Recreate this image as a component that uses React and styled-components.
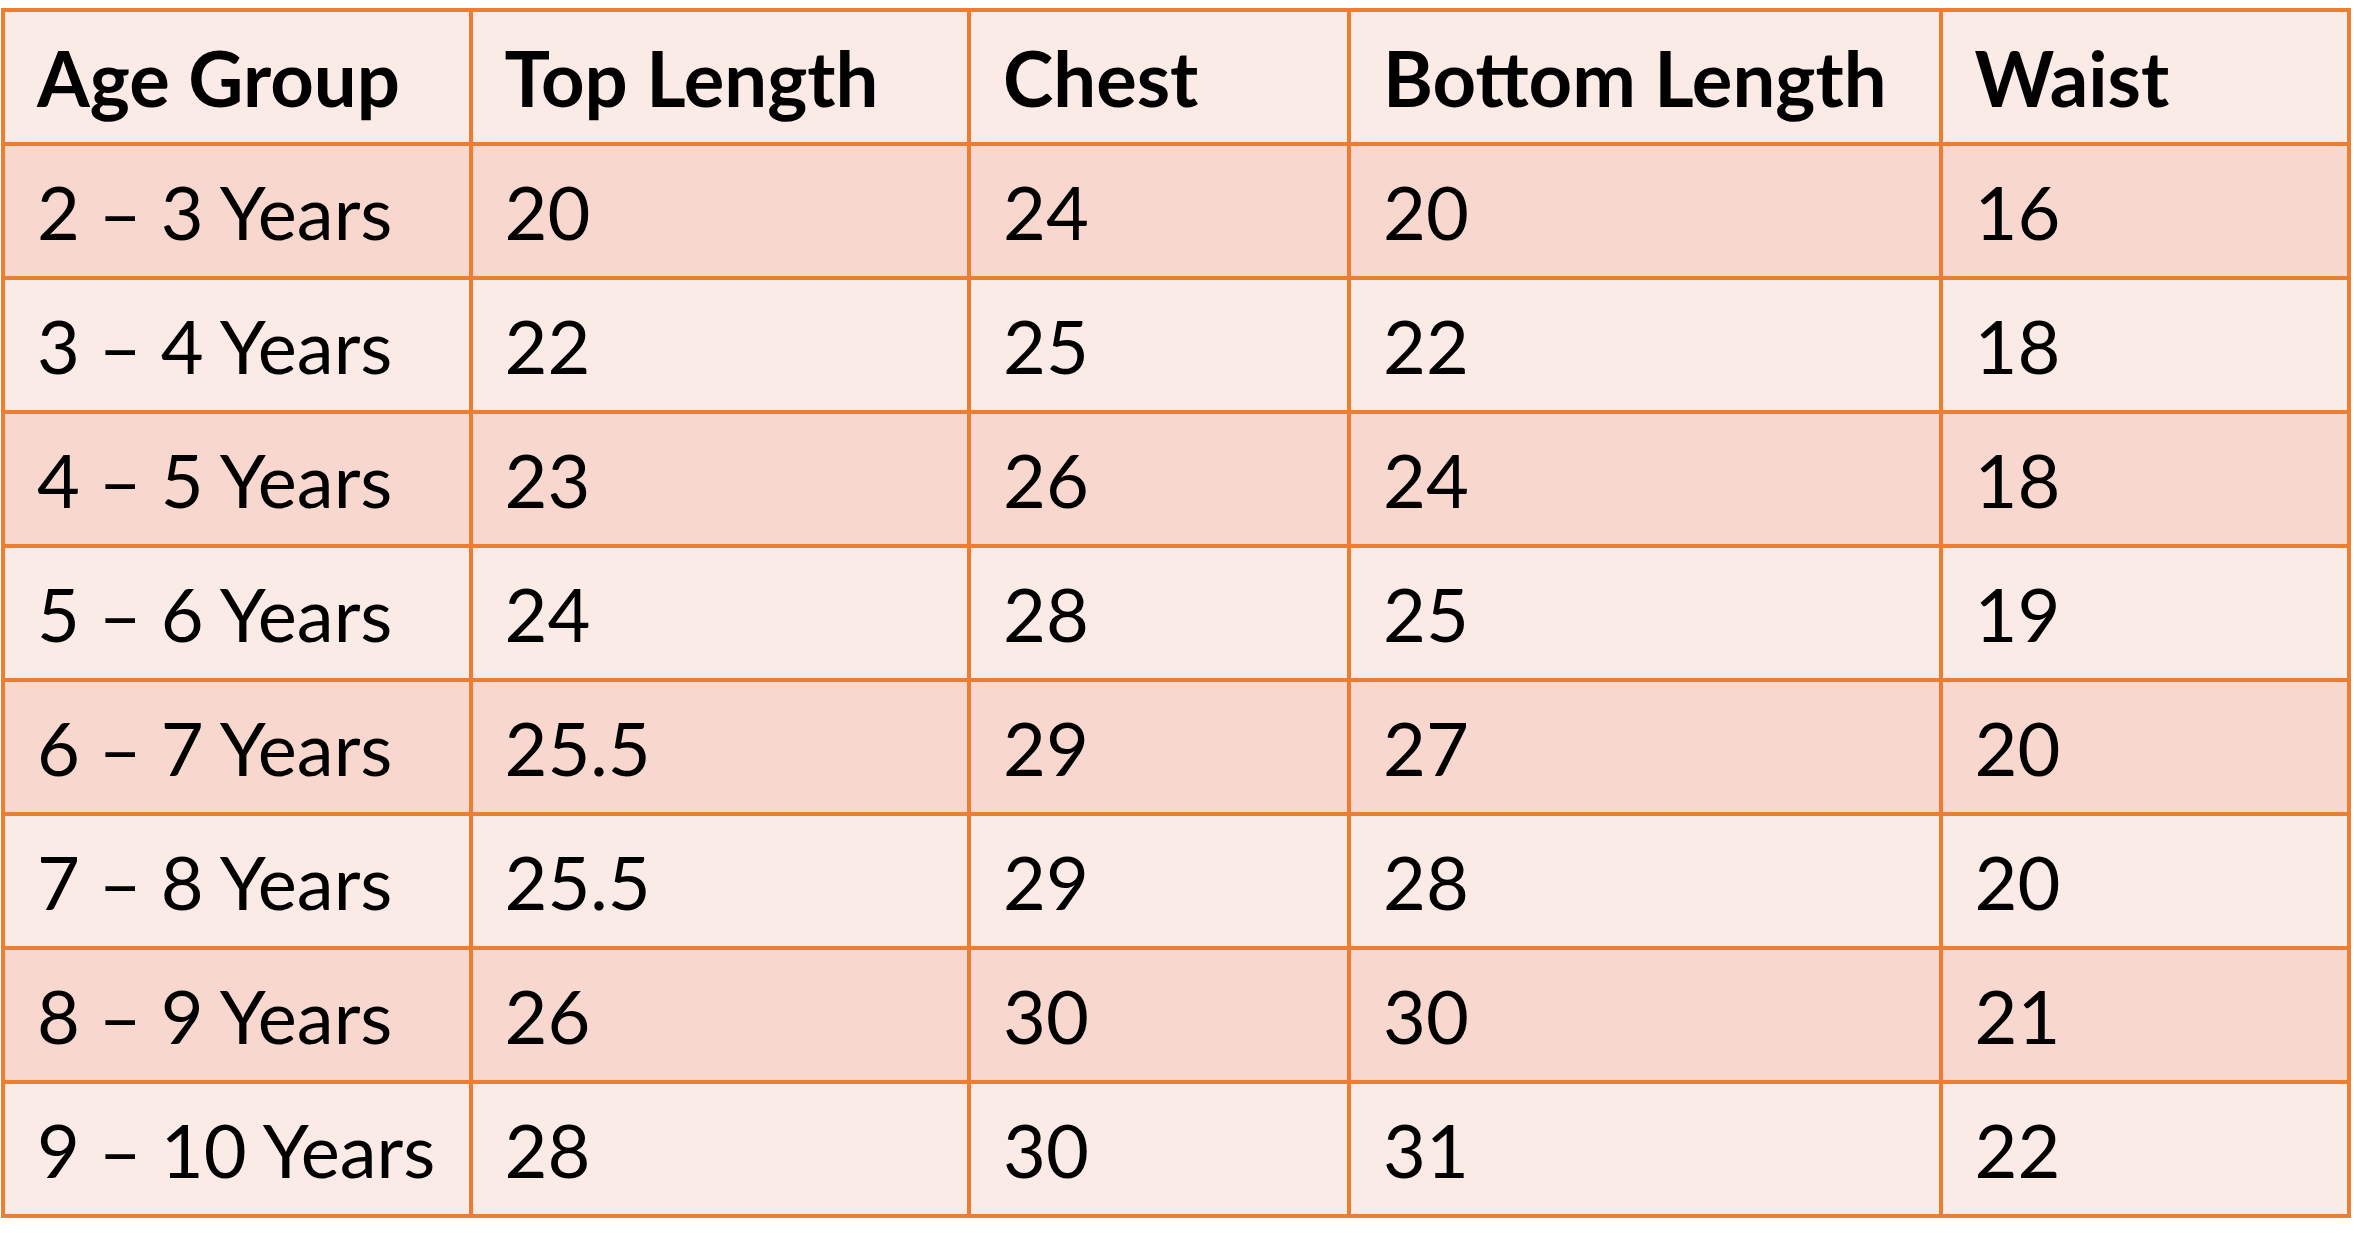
import React from 'react';
import styled, { createGlobalStyle } from 'styled-components';

const GlobalStyle = createGlobalStyle`
  html, body {
    margin: 0;
    padding: 0;
    background: #ffffff;
  }
  body {
    font-family: Lato, "Open Sans", sans-serif;
  }
`;

const Page = styled.div`
  padding: 8px 0 0 1px;
`;

const SizeTable = styled.table`
  width: 2350px;
  table-layout: fixed;
  border-collapse: collapse;
  border: 4px solid #ed7d31;
  font-family: Lato, "Open Sans", sans-serif;
  color: #000;
`;

const Row = styled.tr`
  height: 134px;
  background: ${({ shaded }) => (shaded ? '#f8d8ce' : '#fbebe7')};
`;

const HeadCell = styled.th`
  border: 4px solid #ed7d31;
  padding: 0 0 0 32px;
  text-align: left;
  font-size: 76px;
  font-weight: 700;
  vertical-align: middle;
  white-space: nowrap;
`;

const Cell = styled.td`
  border: 4px solid #ed7d31;
  padding: 0 0 0 32px;
  text-align: left;
  font-size: 74px;
  font-weight: 400;
  vertical-align: middle;
  white-space: nowrap;
`;

const columns = [
  { title: 'Age Group', width: 467.5 },
  { title: 'Top Length', width: 498.5 },
  { title: 'Chest', width: 380 },
  { title: 'Bottom Length', width: 591.5 },
  { title: 'Waist', width: 408.5 },
];

const rows = [
  ['2 – 3 Years', '20', '24', '20', '16'],
  ['3 – 4 Years', '22', '25', '22', '18'],
  ['4 – 5 Years', '23', '26', '24', '18'],
  ['5 – 6 Years', '24', '28', '25', '19'],
  ['6 – 7 Years', '25.5', '29', '27', '20'],
  ['7 – 8 Years', '25.5', '29', '28', '20'],
  ['8 – 9 Years', '26', '30', '30', '21'],
  ['9 – 10 Years', '28', '30', '31', '22'],
];

const App = () => (
  <Page>
    <GlobalStyle />
    <SizeTable>
      <colgroup>
        {columns.map(col => (
          <col key={col.title} style={{ width: col.width }} />
        ))}
      </colgroup>
      <thead>
        <Row>
          {columns.map(col => (
            <HeadCell key={col.title}>{col.title}</HeadCell>
          ))}
        </Row>
      </thead>
      <tbody>
        {rows.map((row, i) => (
          <Row key={row[0]} shaded={i % 2 === 0}>
            {row.map((value, j) => (
              <Cell key={j}>{value}</Cell>
            ))}
          </Row>
        ))}
      </tbody>
    </SizeTable>
  </Page>
);

export default App;
